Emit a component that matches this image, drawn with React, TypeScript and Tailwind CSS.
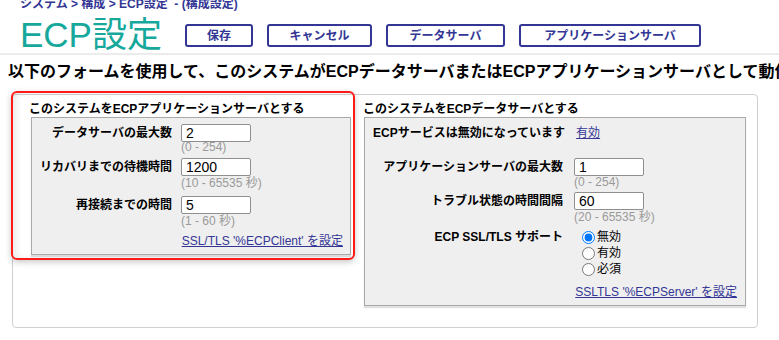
import React from "react"

const NAVY = "text-[#333695]"

const BUTTONS = [
  { label: "保存", w: "w-[68px]" },
  { label: "キャンセル", w: "w-[105px]" },
  { label: "データサーバ", w: "w-[119px]" },
  { label: "アプリケーションサーバ", w: "w-[182px]" },
]

const TextBox = ({ value }: { value: string }) => (
  <input
    type="text"
    defaultValue={value}
    className="box-border block h-[18px] w-[70px] rounded-[2px] border border-[#8f8f8f] bg-white px-[4px] text-[14px] leading-[16px] text-black outline-none"
  />
)

const Hint = ({ children, className = "" }: { children: React.ReactNode; className?: string }) => (
  <div className={`h-[12px] text-[12px] leading-[12px] text-[#9a9a9a] ${className}`}>{children}</div>
)

const Field = ({
  label,
  value,
  labelW,
  gap,
  className = "",
}: {
  label: string
  value: string
  labelW: string
  gap: string
  className?: string
}) => (
  <div className={`flex h-[18px] items-center ${className}`}>
    <div className={`${labelW} text-right text-[12px] font-bold leading-[18px]`}>{label}</div>
    <div className={gap}>
      <TextBox value={value} />
    </div>
  </div>
)

const RADIOS = [
  { label: "無効", checked: true },
  { label: "有効", checked: false },
  { label: "必須", checked: false },
]

export default function App() {
  return (
    <div
      className="h-[340px] w-[779px] overflow-hidden bg-white text-black"
      style={{ fontFamily: '"Liberation Sans", Arial, "Noto Sans CJK JP", sans-serif' }}
    >
      {/* Breadcrumb */}
      <div className={`-mt-[4px] h-[16px] whitespace-nowrap pl-[20px] text-[12px] font-bold leading-[16px] ${NAVY}`}>
        システム &gt; 構成 &gt; ECP設定 &nbsp;- (構成設定)
      </div>

      {/* Title + action buttons */}
      <div className="flex h-[41px] items-start pl-[20px]">
        <h1 className="mt-[3px] h-[38px] w-[147px] whitespace-nowrap text-[35px] font-normal leading-[40px] text-[#17a89c]">
          ECP設定
        </h1>
        <div className="ml-[18px] mt-[12px] flex gap-[14px]">
          {BUTTONS.map((b) => (
            <button
              key={b.label}
              className={`h-[23px] ${b.w} rounded-[3px] border-2 border-[#333695] bg-white text-[12px] font-bold leading-[18px] ${NAVY}`}
            >
              {b.label}
            </button>
          ))}
        </div>
      </div>
      <div className="h-[2px] w-full bg-[#ececec]" />

      {/* Intro sentence */}
      <p className="mt-[7px] h-[20px] whitespace-nowrap pl-[8px] text-[16px] font-bold leading-[20px]">
        以下のフォームを使用して、このシステムがECPデータサーバまたはECPアプリケーションサーバとして動作します。
      </p>

      {/* Outer panel */}
      <div className="ml-[12px] mt-[12px] flex h-[234px] w-[746px] items-start rounded-[4px] border border-[#cfcfcf]">
        {/* LEFT — application server (highlighted) */}
        <div className="-ml-[2px] -mt-[4px] h-[169px] w-[344px] shrink-0 rounded-[6px] border-2 border-[#ff1a1a] shadow-[0_2px_6px_rgba(0,0,0,0.22),inset_4px_0_6px_rgba(0,0,0,0.08)]">
          <div className="h-[24px] pl-[16px] pt-[8px] text-[12px] font-bold leading-[16px]">
            このシステムをECPアプリケーションサーバとする
          </div>
          <div className="ml-[18px] h-[138px] w-[320px] border border-[#a9a9a9] bg-[#efefef] shadow-[0_2px_1px_rgba(0,0,0,0.12)]">
            <Field className="mt-[6px]" label="データサーバの最大数" value="2" labelW="w-[140px]" gap="ml-[9px]" />
            <Hint className="-mt-[1px] ml-[149px]">(0 - 254)</Hint>

            <Field className="mt-[5px]" label="リカバリまでの待機時間" value="1200" labelW="w-[140px]" gap="ml-[9px]" />
            <Hint className="mt-[1px] ml-[149px]">(10 - 65535 秒)</Hint>

            <Field className="mt-[7px]" label="再接続までの時間" value="5" labelW="w-[140px]" gap="ml-[9px]" />
            <Hint className="mt-[1px] ml-[149px]">(1 - 60 秒)</Hint>

            <div className="mt-[7px] h-[14px] pr-[7px] text-right text-[12px] leading-[14px]">
              <a href="#" className={`${NAVY} underline`}>SSL/TLS '%ECPClient' を設定</a>
            </div>
          </div>
        </div>

        {/* RIGHT — data server */}
        <div className="ml-[9px] pt-[6px]">
          <div className="-ml-[1px] h-[16px] text-[12px] font-bold leading-[16px]">このシステムをECPデータサーバとする</div>
          <div className="h-[189px] w-[382px] border border-[#a9a9a9] bg-[#efefef] shadow-[0_2px_1px_rgba(0,0,0,0.12)]">
            <div className="flex h-[23px] pl-[8px] pt-[7px] text-[12px] leading-[16px]">
              <span className="font-bold">ECPサービスは無効になっています</span>
              <a href="#" className={`ml-[11px] underline ${NAVY}`}>有効</a>
            </div>

            <Field className="mt-[17px]" label="アプリケーションサーバの最大数" value="1" labelW="w-[198px]" gap="ml-[11px]" />
            <Hint className="ml-[209px]">(0 - 254)</Hint>

            <Field className="mt-[4px]" label="トラブル状態の時間間隔" value="60" labelW="w-[198px]" gap="ml-[11px]" />
            <Hint className="mt-[1px] ml-[209px]">(20 - 65535 秒)</Hint>

            <div className="mt-[6px] flex items-start">
              <div className="h-[16px] w-[198px] text-right text-[12px] font-bold leading-[16px]">ECP SSL/TLS サポート</div>
              <div className="ml-[19px] flex flex-col">
                {RADIOS.map((r) => (
                  <label key={r.label} className="flex h-[16px] items-center gap-[2px] text-[12px] leading-[16px]">
                    <input
                      type="radio"
                      name="ssl"
                      defaultChecked={r.checked}
                      className="m-0 h-[13px] w-[13px] accent-[#0075ff]"
                    />
                    {r.label}
                  </label>
                ))}
              </div>
            </div>

            <div className="mt-[8px] h-[14px] pr-[8px] text-right text-[12px] leading-[14px]">
              <a href="#" className={`${NAVY} underline`}>SSLTLS '%ECPServer' を設定</a>
            </div>
          </div>
        </div>
      </div>
    </div>
  )
}
